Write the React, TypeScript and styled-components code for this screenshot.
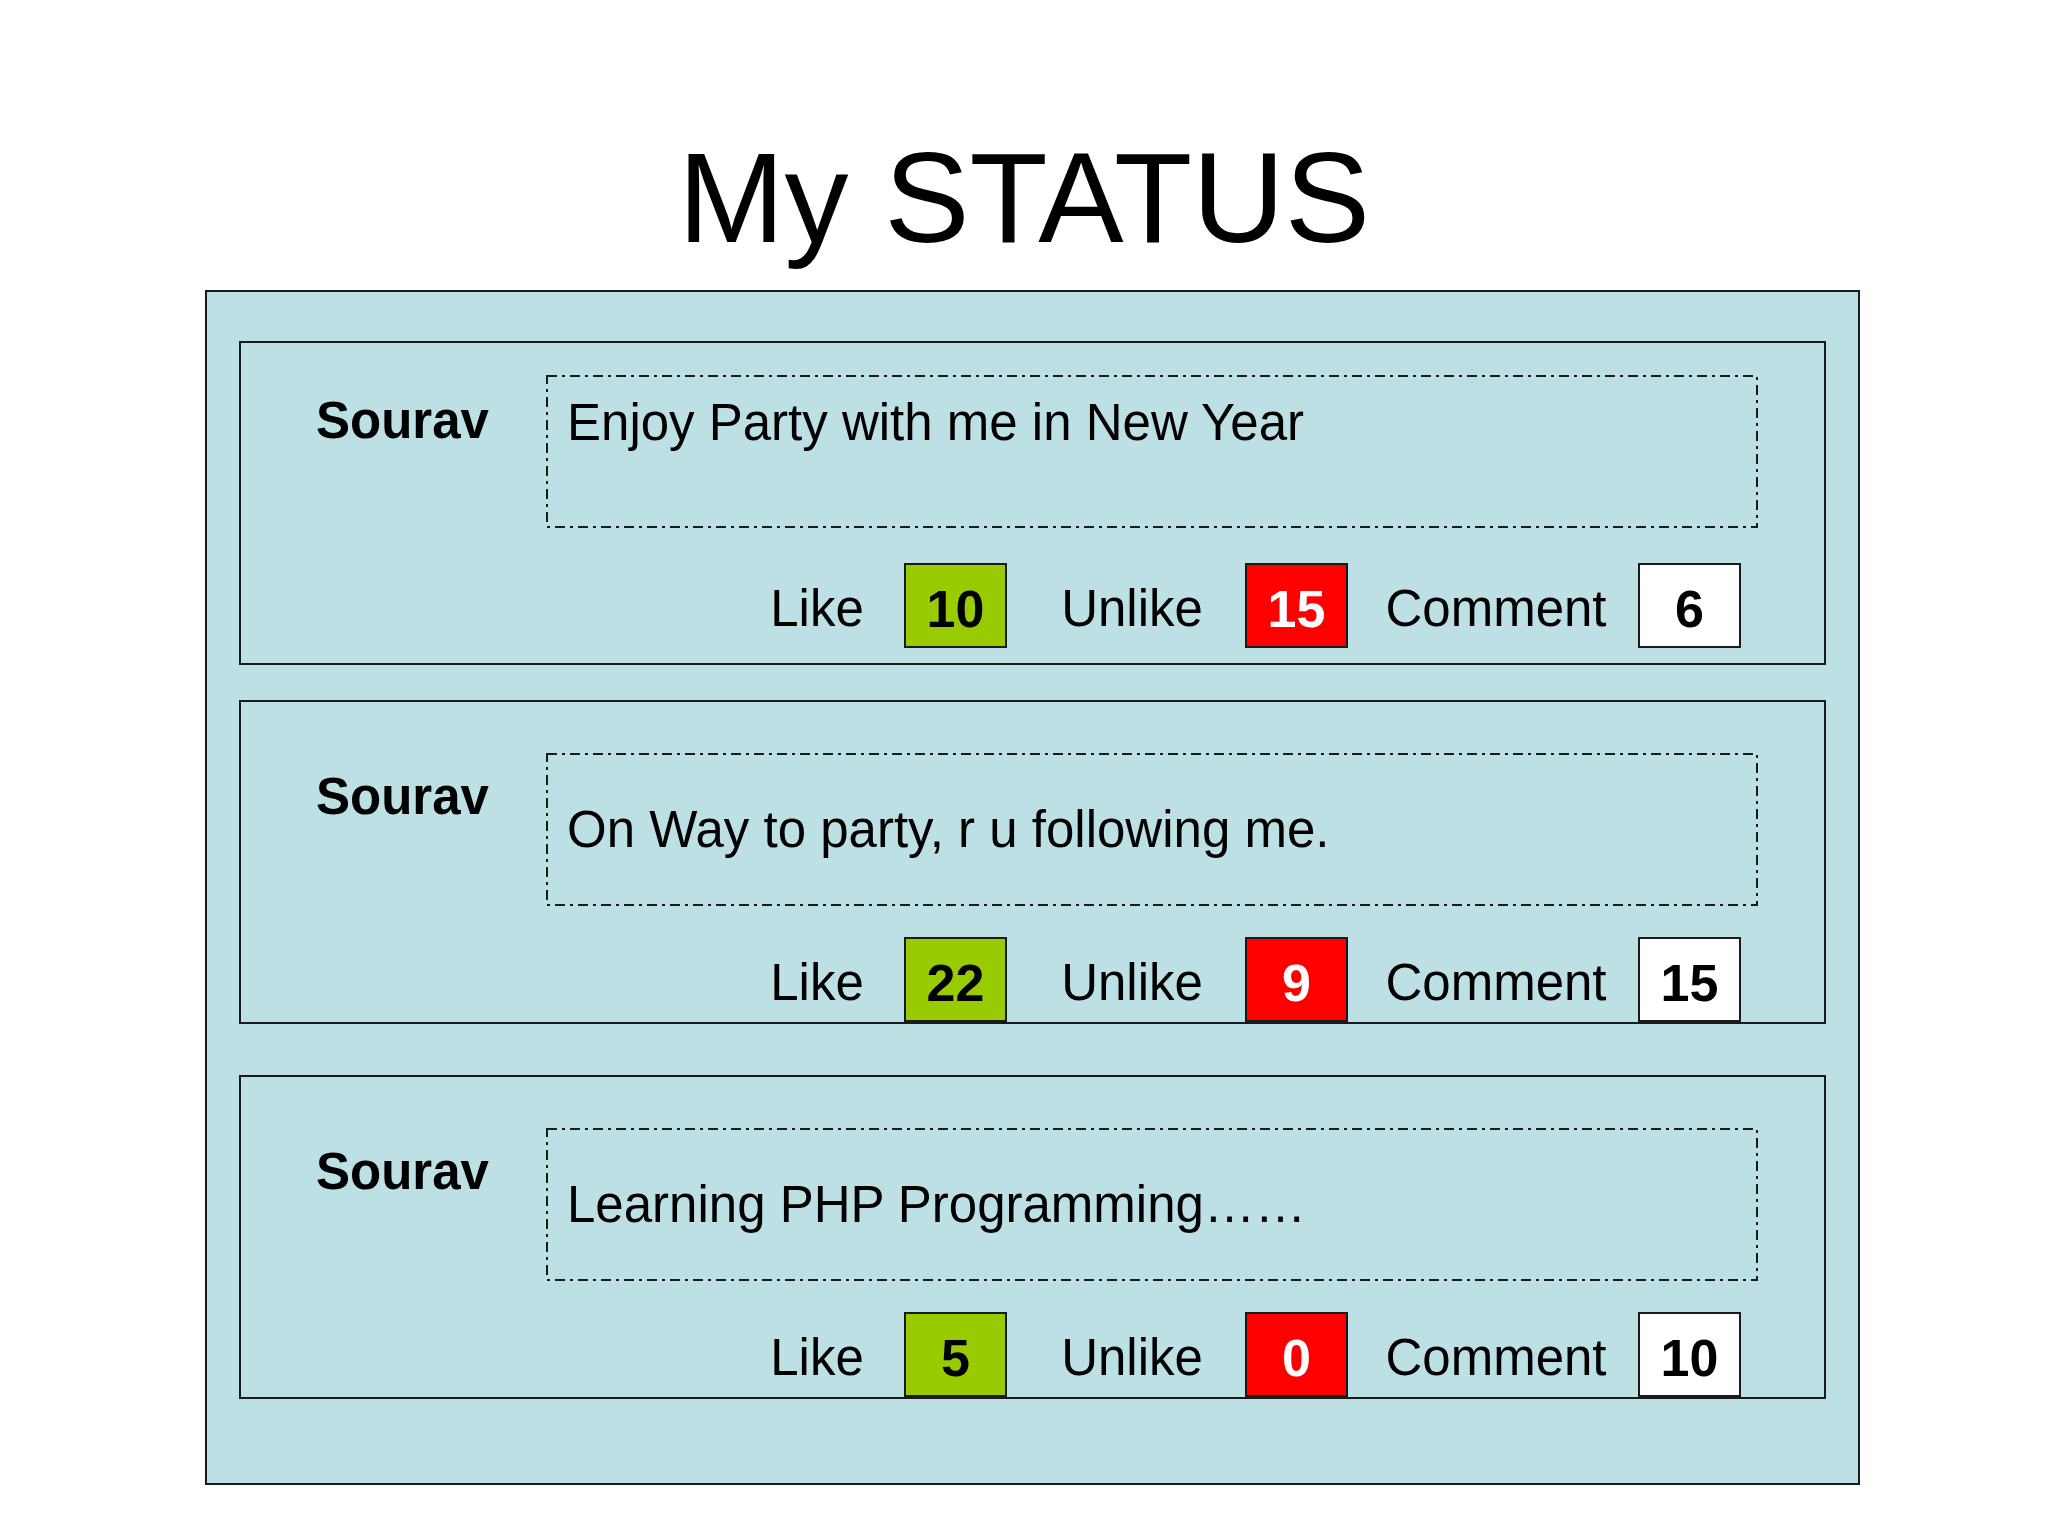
import React from 'react';
import styled, { createGlobalStyle } from 'styled-components';

const GlobalStyle = createGlobalStyle`
  html, body {
    margin: 0;
    padding: 0;
    background: #ffffff;
  }
  body {
    font-family: 'Liberation Sans', Arial, Helvetica, sans-serif;
    color: #000;
  }
`;

const Page = styled.div`
  width: 2048px;
  min-height: 1536px;
  padding-top: 134px;
  box-sizing: border-box;
`;

const Title = styled.h1`
  margin: 0;
  font-size: 128px;
  line-height: 1;
  font-weight: normal;
  text-align: center;
  white-space: nowrap;
`;

const Panel = styled.div`
  box-sizing: border-box;
  width: 1655px;
  margin: 28px 0 0 205px;
  padding: 49px 32px 84px;
  border: 2px solid #1a1a1a;
  background: #bce0e3;
  display: flex;
  flex-direction: column;
`;

const Card = styled.div<{ $gap: number; $padTop: number; $padBottom: number }>`
  box-sizing: border-box;
  height: 324px;
  margin-top: ${(p) => p.$gap}px;
  padding: ${(p) => p.$padTop}px 0 ${(p) => p.$padBottom}px;
  border: 2px solid #1a1a1a;
  display: flex;
  flex-direction: column;
  justify-content: space-between;
`;

const TopRow = styled.div`
  display: grid;
  grid-template-columns: 305px 1212px;
`;

const Name = styled.div<{ $drop: number }>`
  padding: ${(p) => p.$drop}px 0 0 75px;
  font-size: 51px;
  line-height: 1;
  font-weight: bold;
  white-space: nowrap;
`;

const MessageBox = styled.div<{ $centered: boolean }>`
  position: relative;
  box-sizing: border-box;
  height: 153px;
  padding: ${(p) => (p.$centered ? '0' : '22px')} 21px 0;
  display: flex;
  align-items: ${(p) => (p.$centered ? 'center' : 'flex-start')};
  font-size: 51px;
  line-height: 1;
  white-space: nowrap;
`;

const DashFrame = styled.svg`
  position: absolute;
  inset: 0;
  width: 100%;
  height: 100%;
  pointer-events: none;
`;

const Stats = styled.div`
  display: grid;
  grid-template-columns: 174px 103px 238px 103px 290px 103px;
  justify-content: end;
  align-items: center;
  height: 85px;
  padding-right: 83px;
`;

const Label = styled.div<{ $nudge?: number }>`
  text-align: center;
  font-size: 51px;
  line-height: 1;
  padding-top: 6px;
  padding-left: ${(p) => p.$nudge ?? 0}px;
  white-space: nowrap;
`;

const Count = styled.div<{ $bg: string; $fg: string }>`
  box-sizing: border-box;
  width: 103px;
  height: 85px;
  border: 2px solid #1a1a1a;
  background: ${(p) => p.$bg};
  color: ${(p) => p.$fg};
  display: flex;
  align-items: center;
  justify-content: center;
  padding-top: 6px;
  font-size: 52px;
  line-height: 1;
  font-weight: bold;
`;

type Post = {
  text: string;
  likes: number;
  unlikes: number;
  comments: number;
  gap: number;
  padTop: number;
  padBottom: number;
  nameDrop: number;
  centered: boolean;
};

const posts: Post[] = [
  { text: 'Enjoy Party with me in New Year', likes: 10, unlikes: 15, comments: 6, gap: 0, padTop: 32, padBottom: 15, nameDrop: 20, centered: false },
  { text: 'On Way to party, r u following me.', likes: 22, unlikes: 9, comments: 15, gap: 35, padTop: 51, padBottom: 0, nameDrop: 18, centered: true },
  { text: 'Learning PHP Programming\u2026\u2026', likes: 5, unlikes: 0, comments: 10, gap: 51, padTop: 51, padBottom: 0, nameDrop: 18, centered: true },
];

const BOX_W = 1212;
const BOX_H = 153;

const App: React.FC = () => {
  return (
    <>
      <GlobalStyle />
      <Page>
        <Title>My STATUS</Title>
        <Panel>
          {posts.map((post, i) => (
            <Card key={i} $gap={post.gap} $padTop={post.padTop} $padBottom={post.padBottom}>
              <TopRow>
                <Name $drop={post.nameDrop}>Sourav</Name>
                <MessageBox $centered={post.centered}>
                  <DashFrame viewBox={`0 0 ${BOX_W} ${BOX_H}`} preserveAspectRatio="none">
                    <rect
                      x={1}
                      y={1}
                      width={BOX_W - 2}
                      height={BOX_H - 2}
                      fill="none"
                      stroke="#1a1a1a"
                      strokeWidth={2}
                      strokeDasharray="10 5 3 5"
                    />
                  </DashFrame>
                  {post.text}
                </MessageBox>
              </TopRow>
              <Stats>
                <Label>Like</Label>
                <Count $bg="#99cc00" $fg="#000">{post.likes}</Count>
                <Label $nudge={12}>Unlike</Label>
                <Count $bg="#ff0000" $fg="#fff">{post.unlikes}</Count>
                <Label $nudge={6}>Comment</Label>
                <Count $bg="#ffffff" $fg="#000">{post.comments}</Count>
              </Stats>
            </Card>
          ))}
        </Panel>
      </Page>
    </>
  );
};

export default App;
